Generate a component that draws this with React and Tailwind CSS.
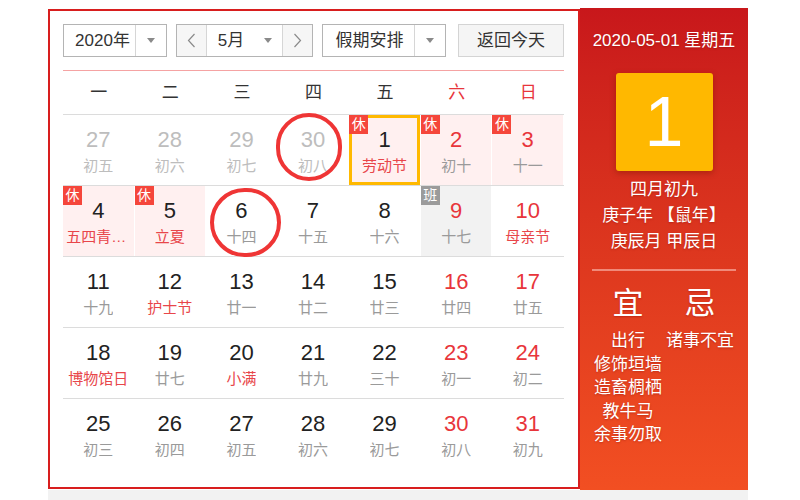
import React from "react";

const FONT = "font-['Liberation_Sans','Noto_Sans_CJK_SC',sans-serif]";

// kind: prev | normal ; red number ; tag: 休 | 班 ; bg: pink | gray ; fest: red lunar text
const weeks = [
    [
        { n: 27, l: "初五", prev: true },
        { n: 28, l: "初六", prev: true },
        { n: 29, l: "初七", prev: true },
        { n: 30, l: "初八", prev: true },
        { n: 1, l: "劳动节", fest: true, tag: "休", bg: "pink", today: true },
        { n: 2, l: "初十", red: true, tag: "休", bg: "pink" },
        { n: 3, l: "十一", red: true, tag: "休", bg: "pink" },
    ],
    [
        { n: 4, l: "五四青年节", fest: true, tag: "休", bg: "pink" },
        { n: 5, l: "立夏", fest: true, tag: "休", bg: "pink" },
        { n: 6, l: "十四" },
        { n: 7, l: "十五" },
        { n: 8, l: "十六" },
        { n: 9, l: "十七", red: true, tag: "班", bg: "gray" },
        { n: 10, l: "母亲节", red: true, fest: true },
    ],
    [
        { n: 11, l: "十九" },
        { n: 12, l: "护士节", fest: true },
        { n: 13, l: "廿一" },
        { n: 14, l: "廿二" },
        { n: 15, l: "廿三" },
        { n: 16, l: "廿四", red: true },
        { n: 17, l: "廿五", red: true },
    ],
    [
        { n: 18, l: "博物馆日", fest: true },
        { n: 19, l: "廿七" },
        { n: 20, l: "小满", fest: true },
        { n: 21, l: "廿九" },
        { n: 22, l: "三十" },
        { n: 23, l: "初一", red: true },
        { n: 24, l: "初二", red: true },
    ],
    [
        { n: 25, l: "初三" },
        { n: 26, l: "初四" },
        { n: 27, l: "初五" },
        { n: 28, l: "初六" },
        { n: 29, l: "初七" },
        { n: 30, l: "初八", red: true },
        { n: 31, l: "初九", red: true },
    ],
];

const weekdays = ["一", "二", "三", "四", "五", "六", "日"];

function Caret() {
    return (
        <span className="w-0 h-0 border-l-[4px] border-r-[4px] border-t-[5px] border-l-transparent border-r-transparent border-t-[#8a8a8a]" />
    );
}

function Chevron({ dir }) {
    return (
        <svg width="9" height="15" viewBox="0 0 9 15">
            <polyline
                points={dir === "left" ? "7.5,1 1.5,7.5 7.5,14" : "1.5,1 7.5,7.5 1.5,14"}
                fill="none"
                stroke="#8a8a8a"
                strokeWidth="1.2"
            />
        </svg>
    );
}

function DayCell({ d }) {
    let bg = "bg-white";
    if (d.bg === "pink") bg = "bg-[#fff0f0]";
    if (d.bg === "gray") bg = "bg-[#f2f2f2]";

    let numColor = "text-[#222]";
    if (d.prev) numColor = "text-[#bdbdbd]";
    else if (d.red) numColor = "text-[#e8353b]";

    let lunarColor = "text-[#9a9a9a]";
    if (d.prev) lunarColor = "text-[#bdbdbd]";
    else if (d.fest) lunarColor = "text-[#e8464a]";

    return (
        <div className={`relative h-[70px] mr-[1px] flex flex-col items-center pt-[12px] ${bg}`}>
            {d.today && <div className="absolute inset-0 border-[3px] border-[#ffb900]" />}
            {d.tag && (
                <span
                    className={`absolute top-0 left-0 z-10 w-[19px] h-[19px] text-center text-[14px] leading-[19px] text-white ${
                        d.tag === "班" ? "bg-[#9b9b9b]" : "bg-[#f5463b]"
                    }`}
                >
                    {d.tag}
                </span>
            )}
            <span className={`text-[22px] leading-[26px] ${numColor}`}>{d.n}</span>
            <span className={`mt-[3px] text-[15px] leading-[20px] max-w-[64px] truncate ${lunarColor}`}>
                {d.l}
            </span>
        </div>
    );
}

export default function App() {
    return (
        <div className={`w-[800px] h-[500px] bg-white pt-[8px] pl-[48px] overflow-hidden ${FONT}`}>
            <div className="flex w-[700px] h-[482px]">
                {/* left: calendar */}
                <div className="w-[532px] h-[480px] mt-[1px] border-2 border-[#d81e1e] pt-[13px] pl-[13px] pr-[14px]">
                    <div className="flex items-center h-[33px] text-[17px] text-[#333]">
                        <div className="flex h-[33px] w-[104px] border border-[#b4b4b4]">
                            <div className="flex-1 flex items-center justify-center pl-[6px]">2020年</div>
                            <div className="w-[31px] flex items-center justify-center border-l border-[#d6d6d6]">
                                <Caret />
                            </div>
                        </div>
                        <div className="flex h-[33px] w-[137px] ml-[9px] border border-[#b4b4b4]">
                            <div className="w-[30px] flex items-center justify-center bg-[#f6f6f6] border-r border-[#d6d6d6]">
                                <Chevron dir="left" />
                            </div>
                            <div className="flex-1 flex items-center">
                                <span className="w-[46px] text-center pl-[2px]">5月</span>
                                <span className="flex-1 flex items-center justify-center">
                                    <Caret />
                                </span>
                            </div>
                            <div className="w-[30px] flex items-center justify-center bg-[#f6f6f6] border-l border-[#d6d6d6]">
                                <Chevron dir="right" />
                            </div>
                        </div>
                        <div className="flex h-[33px] w-[124px] ml-[9px] border border-[#b4b4b4]">
                            <div className="flex-1 flex items-center justify-center pl-[2px]">假期安排</div>
                            <div className="w-[31px] flex items-center justify-center border-l border-[#d6d6d6]">
                                <Caret />
                            </div>
                        </div>
                        <div className="flex h-[33px] w-[106px] ml-[12px] items-center justify-center bg-[#f5f5f5] border border-[#d4d4d4]">
                            返回今天
                        </div>
                    </div>

                    <div className="mt-[13px] h-[1px] bg-[#f5a3a3]" />

                    <div className="grid grid-cols-7 h-[44px] items-center border-b border-[#dcdcdc] text-[17px]">
                        {weekdays.map((w, i) => (
                            <span key={w} className={`text-center ${i >= 5 ? "text-[#e8353b]" : "text-[#333]"}`}>
                                {w}
                            </span>
                        ))}
                    </div>

                    <div className="relative">
                        {weeks.map((row, ri) => (
                            <div
                                key={ri}
                                className={`grid grid-cols-7 ${ri < weeks.length - 1 ? "border-b border-[#dcdcdc]" : ""}`}
                            >
                                {row.map((d, ci) => (
                                    <DayCell key={ci} d={d} />
                                ))}
                            </div>
                        ))}
                        {/* hand-drawn marks */}
                        <div className="absolute left-[213px] top-[-2px] w-[66px] h-[68px] rounded-full border-4 border-[#ef3535] z-20" />
                        <div className="absolute left-[147px] top-[73px] w-[71px] h-[69px] rounded-full border-4 border-[#ef3535] z-20" />
                    </div>
                </div>

                {/* right: day detail */}
                <div className="w-[168px] h-[482px] bg-gradient-to-b from-[#c8171b] to-[#f24f22] text-white flex flex-col items-center pt-[21px] [text-shadow:0_1px_2px_rgba(120,0,0,0.35)]">
                    <div className="text-[17px] leading-[24px]">2020-05-01 星期五</div>
                    <div className="mt-[20px] w-[97px] h-[98px] rounded-[3px] bg-[#ffb800] shadow-[0_2px_6px_rgba(120,20,0,0.45)] flex items-center justify-center text-[70px] leading-none [text-shadow:none]">
                        1
                    </div>
                    <div className="mt-[6px] text-[17px] leading-[26px] text-center">
                        <div>四月初九</div>
                        <div>庚子年 【鼠年】</div>
                        <div>庚辰月 甲辰日</div>
                    </div>
                    <div className="mt-[14px] h-[2px] w-[144px] bg-[#f08a7a]" />
                    <div className="mt-[15px] w-[144px] grid grid-cols-2">
                        <div className="flex flex-col items-center">
                            <span className="text-[31px] leading-[36px]">宜</span>
                            <div className="mt-[7px] text-[17px] leading-[23.5px] text-center">
                                <div>出行</div>
                                <div>修饰垣墙</div>
                                <div>造畜椆栖</div>
                                <div>教牛马</div>
                                <div>余事勿取</div>
                            </div>
                        </div>
                        <div className="flex flex-col items-center">
                            <span className="text-[31px] leading-[36px]">忌</span>
                            <div className="mt-[7px] text-[17px] leading-[23.5px] text-center whitespace-nowrap">
                                <div>诸事不宜</div>
                            </div>
                        </div>
                    </div>
                </div>
            </div>
            <div className="w-[700px] h-[10px] bg-[#f2f2f2]" />
        </div>
    );
}
